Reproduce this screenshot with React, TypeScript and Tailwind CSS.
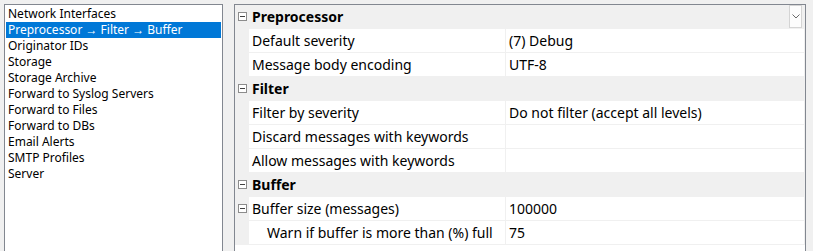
import React from "react";

const listItems = [
  "Network Interfaces",
  "Preprocessor \u2192 Filter \u2192 Buffer",
  "Originator IDs",
  "Storage",
  "Storage Archive",
  "Forward to Syslog Servers",
  "Forward to Files",
  "Forward to DBs",
  "Email Alerts",
  "SMTP Profiles",
  "Server",
];

function Minus() {
  return (
    <svg width="9" height="9" viewBox="0 0 9 9" className="block">
      <rect x="0.5" y="0.5" width="8" height="8" fill="#ffffff" stroke="#8c8c8c" />
      <line x1="2" y1="4.5" x2="7" y2="4.5" stroke="#404040" />
    </svg>
  );
}

function Category({ title, dropdown }: { title: string; dropdown?: boolean }) {
  return (
    <div className="h-[24px] flex items-stretch bg-[#f0f0f0] border-b border-[#f0f0f0] shrink-0">
      <div className="w-[14px] shrink-0 flex items-center pl-[3px]">
        <Minus />
      </div>
      <div className="flex-1 pl-[3px] leading-[23px] font-bold text-black">{title}</div>
      {dropdown && (
        <div className="w-[13px] h-[23px] mr-[3px] border border-[#d4d4d4] bg-[#fcfcfc] flex items-center justify-center">
          <svg width="8" height="5" viewBox="0 0 8 5" className="block">
            <polyline points="0.5,0.5 4,4 7.5,0.5" fill="none" stroke="#6a6a6a" strokeWidth="1" />
          </svg>
        </div>
      )}
    </div>
  );
}

function Prop({
  name,
  value,
  indent,
  expander,
}: {
  name: string;
  value: string;
  indent?: boolean;
  expander?: boolean;
}) {
  return (
    <div className="h-[24px] flex items-stretch bg-[#f0f0f0] border-b border-[#f0f0f0] shrink-0">
      <div className="w-[14px] shrink-0 flex items-center pl-[3px]">{expander && <Minus />}</div>
      <div
        className={
          indent
            ? "w-[256px] shrink-0 bg-white pl-[18px] leading-[23px] text-black whitespace-nowrap overflow-hidden"
            : "w-[256px] shrink-0 bg-white pl-[3px] leading-[23px] text-black whitespace-nowrap overflow-hidden"
        }
      >
        {name}
      </div>
      <div className="w-[1px] shrink-0" />
      <div className="w-[298px] shrink-0 bg-white pl-[3px] leading-[23px] text-black whitespace-nowrap overflow-hidden">
        {value}
      </div>
      <div className="w-[1px] shrink-0" />
    </div>
  );
}

export default function App() {
  return (
    <div className="w-[813px] h-[251px] overflow-hidden bg-[#f0f0f0] flex items-start pt-[4px] pl-[4px] gap-[11px] font-['Noto_Sans','Segoe_UI',sans-serif] text-[12px]">
      <div className="w-[219px] h-[260px] shrink-0 border border-[#828790] bg-white p-[1px]">
        {listItems.map((t, i) => (
          <div
            key={t}
            className={
              i === 1
                ? "h-[16px] leading-[16px] pl-[2px] bg-[#0078d7] text-white whitespace-nowrap"
                : "h-[16px] leading-[16px] pl-[2px] text-black whitespace-nowrap"
            }
          >
            {t}
          </div>
        ))}
      </div>
      <div className="w-[572px] h-[260px] shrink-0 border border-[#828790] bg-white flex flex-col text-[14px]">
        <Category title="Preprocessor" dropdown />
        <Prop name="Default severity" value="(7) Debug" />
        <Prop name="Message body encoding" value="UTF-8" />
        <Category title="Filter" />
        <Prop name="Filter by severity" value="Do not filter (accept all levels)" />
        <Prop name="Discard messages with keywords" value="" />
        <Prop name="Allow messages with keywords" value="" />
        <Category title="Buffer" />
        <Prop name="Buffer size (messages)" value="100000" expander />
        <Prop name="Warn if buffer is more than (%) full" value="75" indent />
      </div>
    </div>
  );
}
